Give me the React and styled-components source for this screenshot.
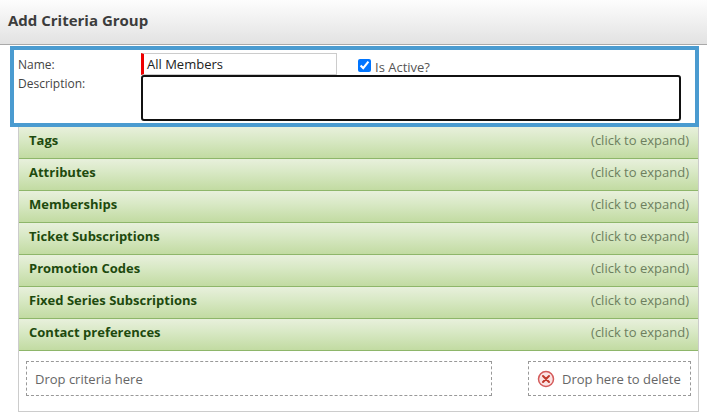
import React from "react";
import styled, { createGlobalStyle } from "styled-components";

const Global = createGlobalStyle`
  *, *::before, *::after { box-sizing: border-box; }
  body { margin: 0; background: #fff; font-family: "Open Sans", "Liberation Sans", Arial, sans-serif; }
`;

const Header = styled.div`
  height: 45px;
  background: linear-gradient(#fdfdfd, #e2e2e2);
  border-bottom: 1px solid #a9a9a9;
  display: flex;
  align-items: center;
  padding: 0 0 4px 8px;
  font-size: 15px;
  font-weight: bold;
  color: #3c3c3c;
`;

const Body = styled.div`
  padding: 1px 8px 0 10px;
`;

const FormBox = styled.div`
  border: 4px solid #4a9bd0;
  padding: 3px 14px 2px 4px;
  display: grid;
  grid-template-columns: 123px 1fr;
  font-size: 12px;
  color: #444;
`;

const Label = styled.div`
  padding-top: ${(p) => p.$top || 0}px;
`;

const NameRow = styled.div`
  display: flex;
  align-items: flex-end;
  gap: 21px;
`;

const NameInput = styled.div`
  width: 196px;
  height: 22px;
  border: 1px solid #ccc;
  border-left: 3px solid #e00;
  font-size: 13px;
  color: #222;
  padding-left: 3px;
  display: flex;
  align-items: center;
`;

const Check = styled.label`
  display: flex;
  align-items: flex-end;
  gap: 4px;
  font-size: 13px;
  color: #555;
  line-height: 16px;
  input { margin: 0 0 3px; width: 13px; height: 13px; }
`;

const TextArea = styled.div`
  height: 46px;
  border: 2px solid #111;
  border-radius: 3px;
`;

const Accordion = styled.div`
  margin: 0 8px 0 18px;
  border-left: 1px solid #ccc;
  border-right: 1px solid #ccc;
`;

const Row = styled.div`
  height: 32px;
  border-bottom: 1px solid #8eb66a;
  background: linear-gradient(#e8f0dc 0%, #d9e9c6 40%, #c2dba2 100%);
  display: flex;
  align-items: center;
  justify-content: space-between;
  padding: 0 9px 5px 10px;
  font-size: 13px;
`;

const Title = styled.span`
  font-weight: bold;
  color: #1e4a0e;
`;

const Hint = styled.span`
  color: #6d7f5e;
`;

const DropArea = styled.div`
  display: flex;
  justify-content: space-between;
  padding: 10px 7px 15px 7px;
  border-bottom: 1px solid #ccc;
`;

const DropBox = styled.div`
  width: ${(p) => p.$w}px;
  height: 35px;
  border: 1px dashed #999;
  display: flex;
  align-items: center;
  gap: 7px;
  padding-left: 8px;
  font-size: 13px;
  color: #666;
`;

const sections = [
  "Tags",
  "Attributes",
  "Memberships",
  "Ticket Subscriptions",
  "Promotion Codes",
  "Fixed Series Subscriptions",
  "Contact preferences",
];

export default function App() {
  return (
    <>
      <Global />
      <Header>Add Criteria Group</Header>
      <Body>
        <FormBox>
          <Label $top={3}>Name:</Label>
          <NameRow>
            <NameInput>All Members</NameInput>
            <Check>
              <input type="checkbox" defaultChecked />
              Is Active?
            </Check>
          </NameRow>
          <Label>Description:</Label>
          <TextArea />
        </FormBox>
      </Body>
      <Accordion>
        {sections.map((s) => (
          <Row key={s}>
            <Title>{s}</Title>
            <Hint>(click to expand)</Hint>
          </Row>
        ))}
        <DropArea>
          <DropBox $w={466}>Drop criteria here</DropBox>
          <DropBox $w={163}>
            <svg width="18" height="18" viewBox="0 0 18 18">
              <circle cx="9" cy="9" r="7.5" fill="#fbe3e3" stroke="#d45a5a" strokeWidth="1.5" />
              <path d="M6 6l6 6M12 6l-6 6" stroke="#c0392b" strokeWidth="2" strokeLinecap="round" />
            </svg>
            Drop here to delete
          </DropBox>
        </DropArea>
      </Accordion>
    </>
  );
}
